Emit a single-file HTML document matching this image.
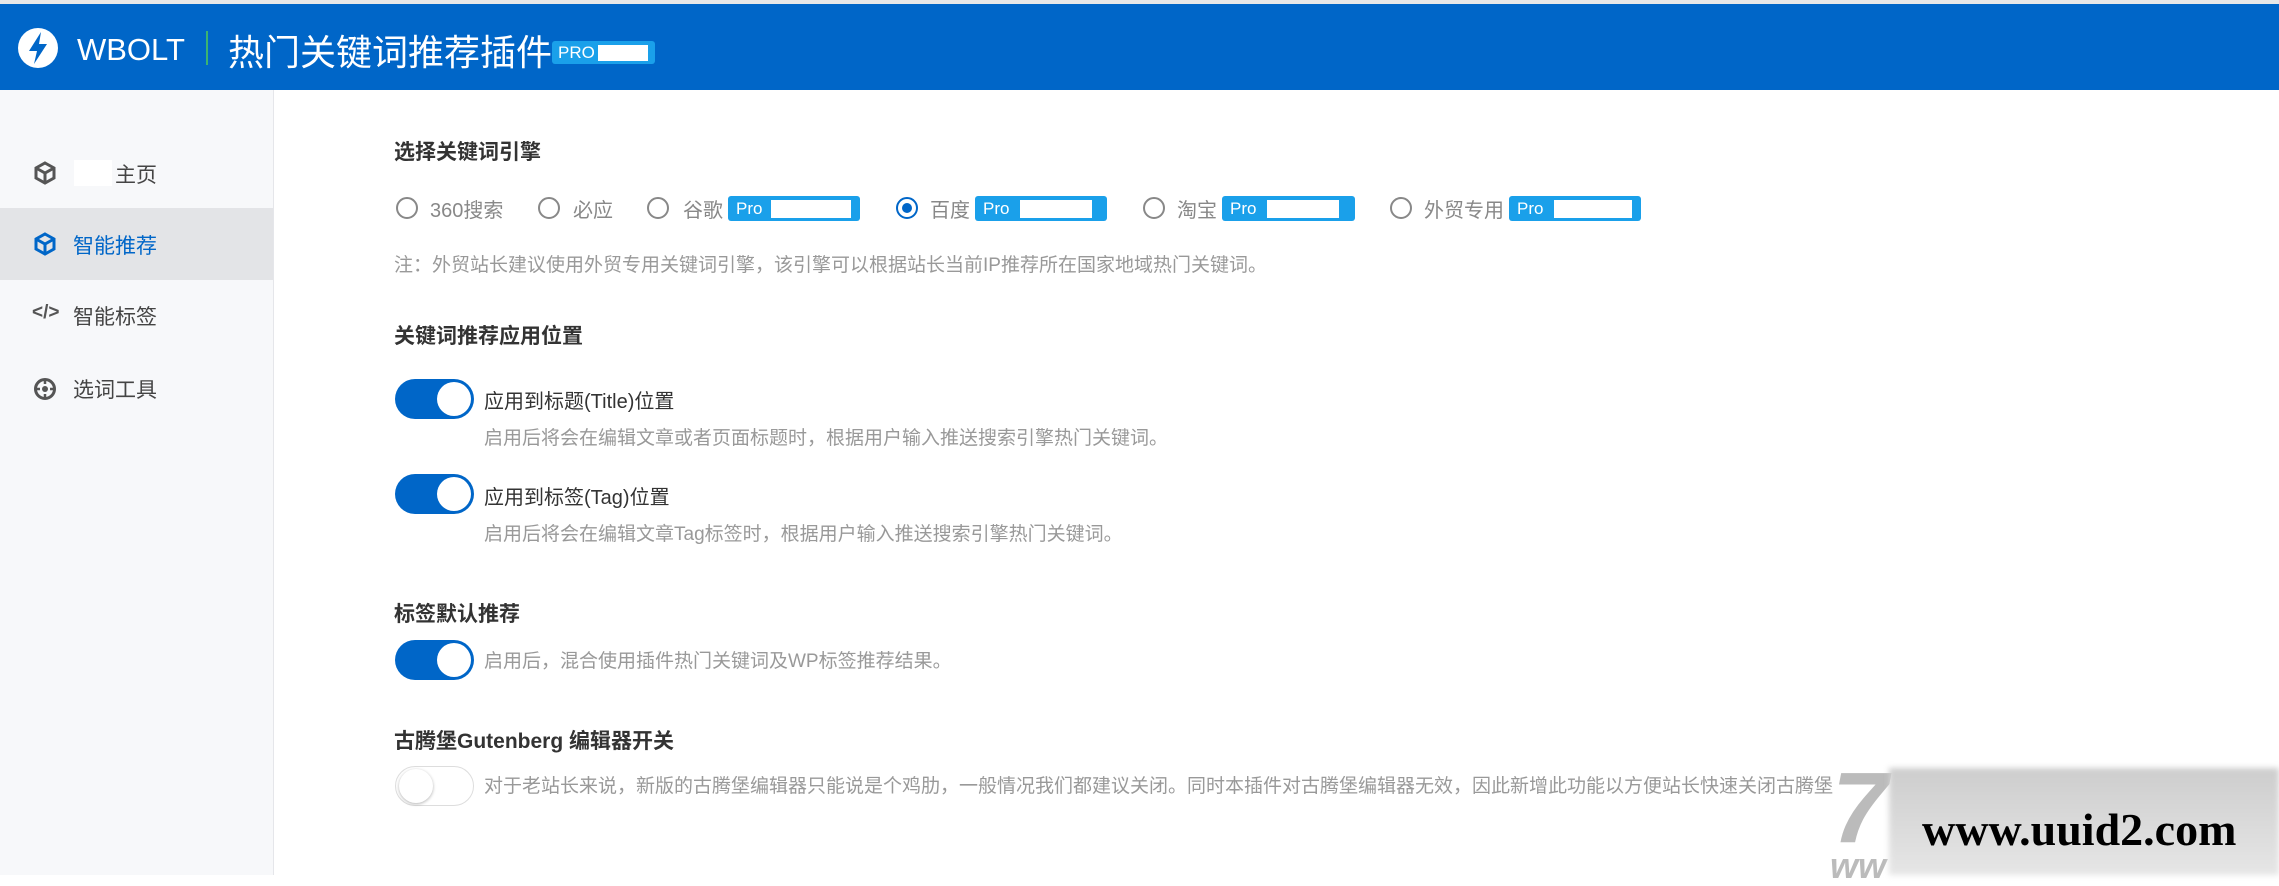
<!DOCTYPE html>
<html><head><meta charset="utf-8"><style>
*{margin:0;padding:0;box-sizing:border-box}
body{width:2279px;height:875px;overflow:hidden;background:#fff;font-family:"Liberation Sans","Noto Sans CJK SC",sans-serif;position:relative;color:#333}
.a{position:absolute;white-space:nowrap}
.hdr{position:absolute;left:0;top:4px;width:2279px;height:86px;background:#0066c8}
.top{position:absolute;left:0;top:0;width:2279px;height:4px;background:#e8e8e8}
.side{position:absolute;left:0;top:90px;width:274px;height:785px;background:#f7f8fa;border-right:1px solid #e5e6ea}
.act{position:absolute;left:0;top:208px;width:273px;height:72px;background:#e3e4e7}
.si{font-size:21px;color:#444}
.h{font-size:21px;font-weight:bold;color:#333}
.radio{position:absolute;width:22px;height:22px;border:2px solid #888;border-radius:50%;background:#fff}
.rl{font-size:20px;color:#888}
.badge{position:absolute;height:25px;background:#1aa0ea;border-radius:3px;color:#fff;font-size:17px;line-height:25px;padding-left:8px}
.badge i{position:absolute;top:4px;height:18px;background:#fff}
.note{font-size:19px;color:#999}
.tg{position:absolute;width:79px;height:40px;border-radius:20px;background:#0066c8}
.tg::after{content:"";position:absolute;right:3px;top:3px;width:34px;height:34px;border-radius:50%;background:#fff}
.tg.off{background:#fff;border:1px solid #ddd}
.tg.off::after{left:3px;right:auto;top:2px;box-shadow:0 1px 3px rgba(0,0,0,.3)}
.t{font-size:20px;color:#333}
.d{font-size:19px;color:#999}
</style></head><body>
<div class="top"></div>
<div class="hdr"></div>
<svg class="a" style="left:17px;top:27px" width="42" height="42" viewBox="0 0 42 42"><circle cx="21" cy="21" r="20" fill="#fff"/><path d="M24 5 L12 24 H20 L17 37 L30 17 H22 Z" fill="#0066c8"/></svg>
<div class="a" style="left:77px;top:32px;font-size:31px;color:#fff">WBOLT</div>
<div class="a" style="left:206px;top:31px;width:2px;height:34px;background:#3cb371"></div>
<div class="a" style="left:228px;top:24px;font-size:36px;color:#fff">热门关键词推荐插件</div>
<div class="a" style="left:552px;top:41px;width:103px;height:23px;background:#1aa0ea;border-radius:3px;color:#fff;font-size:17px;line-height:23px;padding-left:6px">PRO<i style="position:absolute;left:46px;top:4px;width:50px;height:16px;background:#fff"></i></div>

<div class="side"></div>
<div class="act"></div>
<svg class="a" style="left:34px;top:161px" width="22" height="24" viewBox="0 0 22 24"><path d="M11 2 L20 7 V17 L11 22 L2 17 V7 Z M2 7 L11 12 L20 7 M11 12 V22" fill="none" stroke="#555" stroke-width="3"/></svg>
<div class="a" style="left:74px;top:160px;width:38px;height:26px;background:#fff"></div>
<div class="a si" style="left:115px;top:159px">主页</div>
<svg class="a" style="left:34px;top:232px" width="22" height="24" viewBox="0 0 22 24"><path d="M11 2 L20 7 V17 L11 22 L2 17 V7 Z M2 7 L11 12 L20 7 M11 12 V22" fill="none" stroke="#0066c8" stroke-width="3"/></svg>
<div class="a si" style="left:73px;top:230px;color:#0066c8">智能推荐</div>
<div class="a" style="left:32px;top:302px;font-size:19px;color:#555;font-weight:bold">&lt;/&gt;</div>
<div class="a si" style="left:73px;top:301px">智能标签</div>
<svg class="a" style="left:33px;top:377px" width="24" height="24" viewBox="0 0 24 24"><circle cx="12" cy="12" r="9.5" fill="none" stroke="#555" stroke-width="3"/><circle cx="12" cy="12" r="3" fill="#555"/><path d="M12 2V7M12 17V22M2 12H7M17 12H22" stroke="#555" stroke-width="2.5"/></svg>
<div class="a si" style="left:73px;top:374px">选词工具</div>

<div class="a h" style="left:394px;top:136px">选择关键词引擎</div>
<div class="radio" style="left:396px;top:197px"></div><div class="a rl" style="left:430px;top:194px">360搜索</div>
<div class="radio" style="left:538px;top:197px"></div><div class="a rl" style="left:573px;top:194px">必应</div>
<div class="radio" style="left:647px;top:197px"></div><div class="a rl" style="left:683px;top:194px">谷歌</div>
<div class="badge" style="left:728px;top:196px;width:132px">Pro<i style="left:43px;width:80px"></i></div>
<div class="radio" style="left:896px;top:197px;border-color:#0066c8"><i style="position:absolute;left:4px;top:4px;width:10px;height:10px;border-radius:50%;background:#0066c8"></i></div><div class="a rl" style="left:930px;top:194px">百度</div>
<div class="badge" style="left:975px;top:196px;width:132px">Pro<i style="left:45px;width:72px"></i></div>
<div class="radio" style="left:1143px;top:197px"></div><div class="a rl" style="left:1177px;top:194px">淘宝</div>
<div class="badge" style="left:1222px;top:196px;width:133px">Pro<i style="left:45px;width:72px"></i></div>
<div class="radio" style="left:1390px;top:197px"></div><div class="a rl" style="left:1424px;top:194px">外贸专用</div>
<div class="badge" style="left:1509px;top:196px;width:132px">Pro<i style="left:45px;width:78px"></i></div>
<div class="a note" style="left:394px;top:250px">注：外贸站长建议使用外贸专用关键词引擎，该引擎可以根据站长当前IP推荐所在国家地域热门关键词。</div>

<div class="a h" style="left:394px;top:320px">关键词推荐应用位置</div>
<div class="tg" style="left:395px;top:379px"></div>
<div class="a t" style="left:484px;top:385px">应用到标题(Title)位置</div>
<div class="a d" style="left:484px;top:423px">启用后将会在编辑文章或者页面标题时，根据用户输入推送搜索引擎热门关键词。</div>
<div class="tg" style="left:395px;top:474px"></div>
<div class="a t" style="left:484px;top:481px">应用到标签(Tag)位置</div>
<div class="a d" style="left:484px;top:519px">启用后将会在编辑文章Tag标签时，根据用户输入推送搜索引擎热门关键词。</div>

<div class="a h" style="left:394px;top:598px">标签默认推荐</div>
<div class="tg" style="left:395px;top:640px"></div>
<div class="a d" style="left:484px;top:646px">启用后，混合使用插件热门关键词及WP标签推荐结果。</div>

<div class="a h" style="left:394px;top:725px">古腾堡Gutenberg 编辑器开关</div>
<div class="tg off" style="left:395px;top:766px"></div>
<div class="a d" style="left:484px;top:771px">对于老站长来说，新版的古腾堡编辑器只能说是个鸡肋，一般情况我们都建议关闭。同时本插件对古腾堡编辑器无效，因此新增此功能以方便站长快速关闭古腾堡</div>
<div class="a" style="left:1832px;top:758px;font-size:100px;font-weight:bold;font-style:italic;color:#bbb;line-height:1">7</div>
<div class="a" style="left:1830px;top:848px;font-size:36px;font-weight:bold;font-style:italic;color:#bbb;line-height:1">ww</div>
<div class="a" style="left:1889px;top:768px;width:390px;height:107px;background:linear-gradient(180deg,#cdcdcd,#e6e6e6);filter:blur(3px)"></div>
<div class="a" style="left:1922px;top:807px;font-family:'Liberation Serif',serif;font-weight:bold;font-size:46px;line-height:1;color:#000">www.uuid2.com</div>
</body></html>
